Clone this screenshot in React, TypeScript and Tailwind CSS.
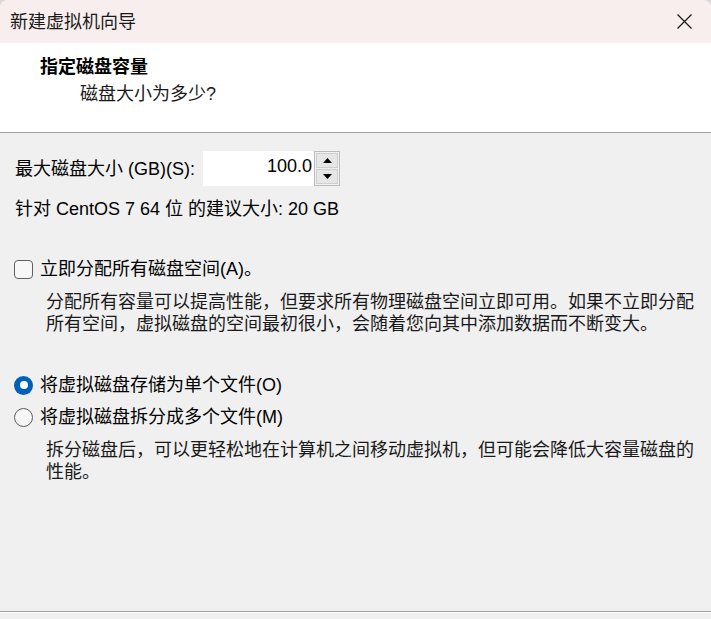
import React from "react";

const font = {
  fontFamily: '"Liberation Sans", "Noto Sans CJK SC", sans-serif',
};

function Radio({ checked }: { checked: boolean }) {
  if (checked) {
    return (
      <div className="w-[19px] h-[19px] rounded-full bg-[#005fb8] flex items-center justify-center shrink-0">
        <div className="w-[8px] h-[8px] rounded-full bg-white" />
      </div>
    );
  }
  return <div className="w-[19px] h-[19px] rounded-full border border-[#5c5c5c] bg-[#f6f6f6] shrink-0" />;
}

export default function App() {
  return (
    <div className="w-[711px] h-[619px] bg-[#d9d9d9]">
      <div
        className="w-[711px] h-[619px] bg-[#f0f0f0] flex flex-col text-[18px] text-black rounded-t-[8px] overflow-hidden"
        style={font}
      >
        {/* Title bar */}
        <div className="h-[43px] bg-[#f8eeee] flex items-center justify-between pl-[10px] pr-[19px] shrink-0">
          <span className="leading-[24px] text-[#1a1a1a]">新建虚拟机向导</span>
          <svg width="15" height="15" viewBox="0 0 15 15">
            <path d="M0.5 0.5 L14.5 14.5 M14.5 0.5 L0.5 14.5" stroke="#1a1a1a" strokeWidth="1.3" fill="none" />
          </svg>
        </div>

        {/* Header */}
        <div className="h-[90px] bg-white border-b border-[#a0a0a0] pl-[40px] pt-[12px] shrink-0">
          <div className="leading-[24px] font-bold">指定磁盘容量</div>
          <div className="leading-[24px] mt-[3px] pl-[40px] text-[#1a1a1a]">磁盘大小为多少?</div>
        </div>

        {/* Body */}
        <div className="flex-1 flex flex-col pl-[14px]">
          <div className="mt-[18px] flex items-center h-[35px]">
            <span className="w-[189px] leading-[24px] pl-[1px]">最大磁盘大小 (GB)(S):</span>
            <div className="w-[111px] h-[35px] bg-white flex items-start justify-end pt-[3px] pr-[2px] leading-[24px]">
              100.0
            </div>
            <div className="w-[26px] h-[35px] border border-[#bcbcbc] bg-[#f0f0f0] p-[1px] flex flex-col gap-[1px]">
              <div className="flex-1 border border-[#cfcfcf] bg-[#e6e6e6] flex items-center justify-center">
                <svg width="9" height="5" viewBox="0 0 9 5">
                  <path d="M0 5 L4.5 0 L9 5 Z" fill="#000" />
                </svg>
              </div>
              <div className="flex-1 border border-[#cfcfcf] bg-[#e6e6e6] flex items-center justify-center">
                <svg width="9" height="5" viewBox="0 0 9 5">
                  <path d="M0 0 L9 0 L4.5 5 Z" fill="#000" />
                </svg>
              </div>
            </div>
          </div>

          <div className="mt-[11px] leading-[24px] pl-[1px]">针对 CentOS 7 64 位 的建议大小: 20 GB</div>

          <div className="mt-[36px] flex items-center gap-[7px] h-[24px]">
            <div className="w-[19px] h-[19px] rounded-[4px] border border-[#5f5f5f] bg-[#f7f7f7] shrink-0" />
            <span className="leading-[24px]">立即分配所有磁盘空间(A)。</span>
          </div>

          <div className="mt-[10px] pl-[32px] leading-[22px] text-[#1a1a1a]">
            分配所有容量可以提高性能，但要求所有物理磁盘空间立即可用。如果不立即分配
            <br />
            所有空间，虚拟磁盘的空间最初很小，会随着您向其中添加数据而不断变大。
          </div>

          <div className="mt-[38px] flex items-center gap-[7px] h-[24px]">
            <Radio checked />
            <span className="leading-[24px]">将虚拟磁盘存储为单个文件(O)</span>
          </div>
          <div className="mt-[8px] flex items-center gap-[7px] h-[24px]">
            <Radio checked={false} />
            <span className="leading-[24px]">将虚拟磁盘拆分成多个文件(M)</span>
          </div>

          <div className="mt-[10px] pl-[32px] leading-[22px] text-[#1a1a1a]">
            拆分磁盘后，可以更轻松地在计算机之间移动虚拟机，但可能会降低大容量磁盘的
            <br />
            性能。
          </div>
        </div>

        {/* Footer line */}
        <div className="h-[8px] border-t border-[#a0a0a0] shrink-0">
          <div className="h-[1px] bg-white" />
        </div>
      </div>
    </div>
  );
}
